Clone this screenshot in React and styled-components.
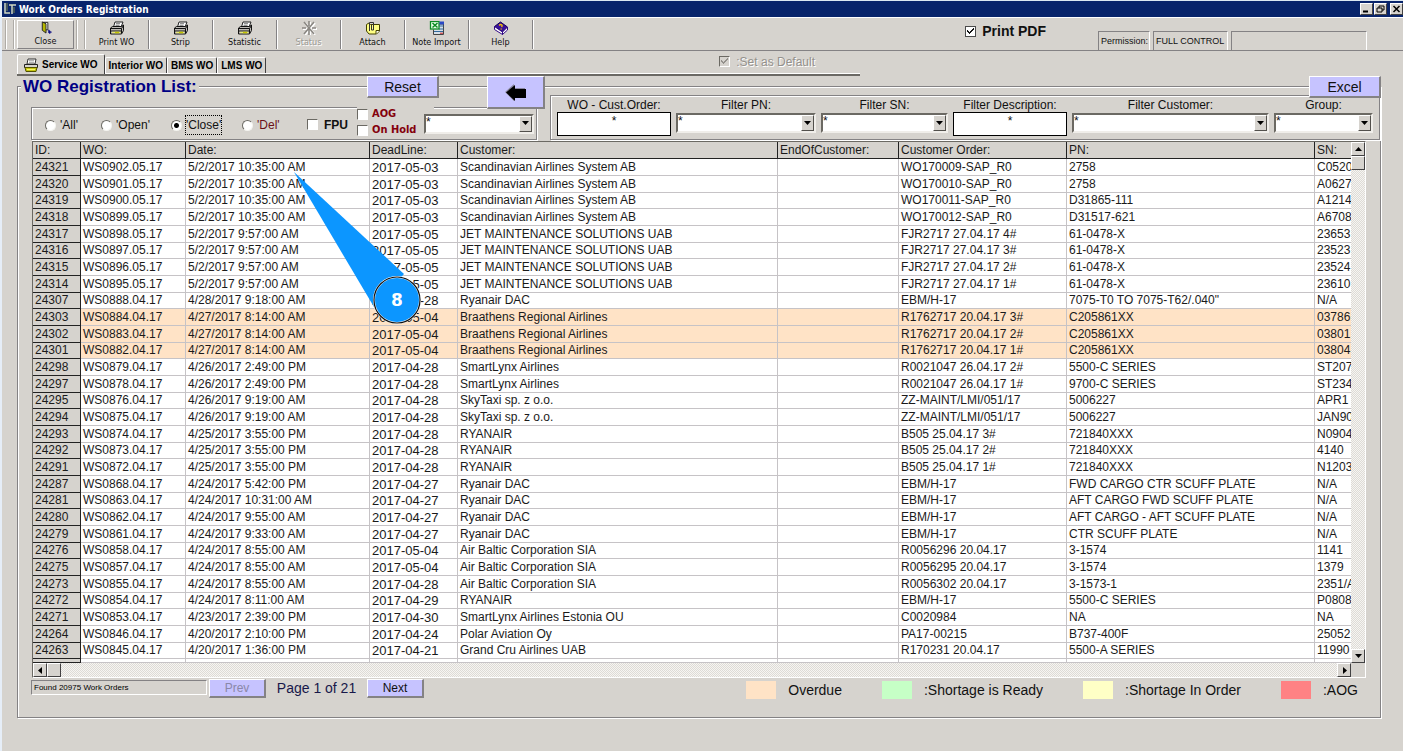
import React from "react";
import styled, { createGlobalStyle, css } from "styled-components";

const face = "#d6d3ce";
const shade = "#848284";
const sans = '"Liberation Sans", Arial, sans-serif';
const ui = '"DejaVu Sans Condensed", "DejaVu Sans", sans-serif';

const GlobalStyle = createGlobalStyle`
  * { box-sizing: border-box; }
  body { margin: 0; background: ${face}; font: 12px ${sans}; color: #111; }
  button, input, select { font: inherit; color: inherit; margin: 0; }
  button { padding: 0; }
`;

const Window = styled.div`
  min-height: 100vh;
  background: ${face};
  border-left: 2px solid #e6eef8;
  border-top: 1px solid #dce8f2;
  overflow: hidden;
`;

const TitleBar = styled.header`
  display: flex;
  align-items: center;
  height: 16px;
  padding-left: 2px;
  gap: 3px;
  background: #08246b;
  color: #fff;
  font: bold 10px ${ui};
  white-space: nowrap;
`;

const WindowButtons = styled.div`
  display: flex;
  margin-left: auto;
  gap: 1px;
`;

const WindowButton = styled.button`
  display: flex;
  align-items: center;
  justify-content: center;
  width: 13px;
  height: 12px;
  margin-left: ${(p) => (p.$apart ? "2px" : "0")};
  background: ${face};
  border: 1px solid;
  border-color: #fff #424142 #424142 #fff;
`;

const Toolbar = styled.div`
  display: flex;
  height: 34px;
  padding-left: 3px;
  border-top: 1px solid #fff;
  border-bottom: 1px solid ${shade};
`;

const Grip = styled.span`
  width: 9px;
  margin: 2px 0 1px;
  border: solid #aeaba6;
  border-width: 0 1px;
  box-shadow: 1px 0 #fff, inset 1px 0 #fff;
`;

const ToolButton = styled.button`
  display: flex;
  flex-direction: column;
  align-items: center;
  width: ${(p) => (p.$raised ? "57px" : "64px")};
  margin: 2px 0 1px;
  padding-top: ${(p) => (p.$raised ? "0" : "1px")};
  background: none;
  border: 0 solid ${shade};
  border-right-width: 1px;
  box-shadow: 1px 0 #fff;
  font: 9px/14px ${ui};
  white-space: nowrap;
  ${(p) => p.$raised && css`
    border-width: 1px;
    border-color: #fff ${shade} ${shade} #fff;
    box-shadow: none;
    margin-left: 3px;
    margin-right: 2px;
  `}
  &:disabled { color: #9c9a94; text-shadow: 1px 1px #fff; }
  svg { display: block; }
`;

const StatusPanels = styled.div`
  display: flex;
  align-items: flex-end;
  gap: 3px;
  margin: 0 36px 0 52px;
`;

const StatusPanel = styled.div`
  width: ${(p) => p.$width}px;
  height: 19px;
  padding: 0 2px;
  border: solid;
  border-width: 1px 1px 0;
  border-color: ${shade} #fff #fff ${shade};
  font: 9px/19px ${sans};
  white-space: nowrap;
`;

const Check = styled.input.attrs({ type: "checkbox" })`
  appearance: none;
  flex: none;
  width: 11px;
  height: 11px;
  border: 1px solid;
  border-color: ${(p) => (p.$flat ? "#000" : "#6b6963 #fff #fff #6b6963")};
  outline: ${(p) => (p.$flat ? "1px solid #4a4a4a" : "0")};
  outline-offset: -1px;
  background: ${(p) => (p.disabled ? face : "#fff")};
  &:checked {
    background-image: linear-gradient(45deg, transparent 42%, currentColor 42% 60%, transparent 60%),
      linear-gradient(-45deg, transparent 38%, currentColor 38% 62%, transparent 62%);
    background-size: 3px 4px, 5px 6px;
    background-position: 1px 3px, 3px 1px;
    background-repeat: no-repeat;
  }
`;

const Label = styled.label`
  display: flex;
  align-items: center;
  gap: 6px;
  white-space: nowrap;
`;

const PrintLabel = styled(Label)`
  margin-left: auto;
  height: 26px;
  font-size: 14px;
  font-weight: bold;
`;

const DefaultLabel = styled(Label)`
  margin: 0 45px 2px auto;
  align-self: center;
  color: #94918c;
  text-shadow: 1px 1px #fff;
`;

const TabStrip = styled.nav`
  display: flex;
  align-items: flex-end;
  width: 843px;
  max-width: 100%;
  height: 25px;
  margin-left: 15px;
  border-bottom: 2px solid #6b6964;
  box-shadow: inset 0 -1px #fff;
`;

const Tab = styled.button`
  display: flex;
  align-items: center;
  gap: 4px;
  height: ${(p) => (p.$active ? "20px" : "16px")};
  margin-bottom: ${(p) => (p.$active ? "0" : "1px")};
  padding: 0 ${(p) => (p.$active ? "6px" : "3px")};
  background: ${face};
  border: solid;
  border-width: 1px 1px 0;
  border-color: #fff #424142 #fff #fff;
  border-radius: 2px 2px 0 0;
  color: #000;
  font: bold 10px ${sans};
  white-space: nowrap;
`;

const Panel = styled.section`
  margin: 10px 22px 32px 15px;
  border: 1px solid ${shade};
  box-shadow: 1px 1px #fff, inset 1px 1px #fff;
`;

const PanelHead = styled.div`
  display: flex;
  height: 22px;
  margin: -11px -1px 0 0;
`;

const TitleSlot = styled.div`
  width: 349px;
`;

const Title = styled.h1`
  display: inline-block;
  margin: 0 0 0 3px;
  padding: 0 2px;
  background: ${face};
  color: #000084;
  font: bold 17px/22px ${sans};
  white-space: nowrap;
`;

const PushButton = styled.button`
  display: flex;
  align-items: center;
  justify-content: center;
  position: relative;
  width: ${(p) => p.$width}px;
  height: ${(p) => p.$height}px;
  background: #c6c3ff;
  border: solid;
  border-width: 1px 2px 2px 1px;
  border-color: #fff ${shade} ${shade} #fff;
  font-size: ${(p) => p.$size || 12}px;
  &:disabled { color: #8a87a8; }
`;

const ArrowButton = styled(PushButton)`
  margin-left: 48px;
`;

const ExcelButton = styled(PushButton)`
  margin-left: auto;
`;

const Filters = styled.div`
  display: flex;
  align-items: flex-end;
  gap: 13px;
  margin: -3px 0 0 13px;
`;

const frame = css`
  border: 1px solid ${shade};
  box-shadow: 1px 1px #fff, inset 1px 1px #fff;
`;

const StateBox = styled.div`
  display: flex;
  align-items: center;
  width: 506px;
  height: 33px;
  padding-left: 13px;
  ${frame}
`;

const StateOption = styled(Label)`
  gap: 3px;
  margin-top: 3px;
  width: ${(p) => p.$width}px;
  color: ${(p) => (p.$danger ? "#6b1018" : "inherit")};
`;

const OptionText = styled.span`
  padding: 2px 0;
  border: 1px dotted ${(p) => (p.$focused ? "#000" : "transparent")};
`;

const Radio = styled.input.attrs({ type: "radio" })`
  appearance: none;
  width: 11px;
  height: 11px;
  border: 1px solid;
  border-color: #6b6963 #f4f4f0 #f4f4f0 #6b6963;
  border-radius: 50%;
  background: #fff;
  &:checked { background: radial-gradient(#000 0 2px, #fff 3px); }
`;

const FpuLabel = styled(Label)`
  width: 50px;
  margin-top: 2px;
  font-weight: bold;
`;

const FlagStack = styled.div`
  align-self: flex-start;
  width: 77px;
  margin: -2px -10px 0 0;
  background: ${face};
`;

const FlagLabel = styled(Label)`
  gap: 4px;
  height: 16px;
  color: #84000c;
  font: bold 11px/16px ${ui};
`;

const ComboBox = styled.div`
  position: relative;
  width: ${(p) => (p.$width ? p.$width + "px" : "auto")};
  height: 20px;
  margin-top: ${(p) => (p.$width ? "0" : "1px")};
  background: #fff;
  border: 2px solid;
  border-color: #6b6963 #f0eeea #f0eeea #6b6963;
`;

const ComboSelect = styled.select`
  display: block;
  appearance: none;
  width: 100%;
  height: 16px;
  padding: 0 16px 4px 0;
  border: 0;
  border-radius: 0;
  background: transparent;
  line-height: 12px;
  outline: 0;
`;

const ComboArrow = styled.span`
  position: absolute;
  top: 0;
  right: 0;
  display: flex;
  align-items: center;
  justify-content: center;
  width: 13px;
  height: 16px;
  background: ${face};
  border: 1px solid;
  border-color: #fff #52504c #52504c #fff;
  pointer-events: none;
`;

const FilterBox = styled.div`
  display: grid;
  grid-template-columns: 114px 140fr 127fr 114px 197fr 99fr;
  gap: 5px;
  flex: 1;
  height: 45px;
  padding: 2px 6px 0;
  ${frame}
`;

const Field = styled.div`
  min-width: 0;
  label {
    display: block;
    line-height: 14px;
    text-align: center;
    white-space: nowrap;
  }
`;

const TextBox = styled.input`
  display: block;
  width: 100%;
  height: 24px;
  padding: 0 0 6px;
  border: 1px solid #000;
  background: #fff;
  text-align: center;
`;

const GridFrame = styled.div`
  position: relative;
  margin: 1px 14px 0 14px;
  border: 1px solid;
  border-color: #6b6963 #fff #fff #6b6963;
`;

const GridBody = styled.div`
  display: flex;
`;

const GridView = styled.div`
  flex: 1;
  min-width: 0;
  overflow: hidden;
  background: #fff;
`;

const Table = styled.table`
  width: 100%;
  min-width: 1340px;
  table-layout: fixed;
  border-collapse: separate;
  border-spacing: 0;
  line-height: 15px;
  color: #1a1a1a;
`;

const HeadCell = styled.th`
  height: 17px;
  padding: 0 2px;
  background: ${face};
  border: solid #222;
  border-width: 0 1px 1px 0;
  font-weight: normal;
  text-align: left;
  white-space: nowrap;
`;

const Row = styled.tr`
  height: 17px;
  background: ${(p) => (p.$overdue ? "#ffe3c6" : "#fff")};
  &:nth-child(3n) { height: 16px; }
  &:last-child { height: 4px; }
`;

const Cell = styled.td`
  padding: 0 2px;
  border: solid #c6c3c6;
  border-width: 0 1px 1px 0;
  font-size: ${(p) => (p.$due ? "13px" : "12px")};
  white-space: nowrap;
  overflow: hidden;
`;

const IdCell = styled.th`
  padding: 0 2px;
  background: ${face};
  border: solid #222;
  border-width: 0 1px 1px 0;
  font-weight: normal;
  text-align: left;
`;

const track = css`
  background: repeating-conic-gradient(#f6f5f2 0 25%, #dedbd6 0 50%) 0 0 / 2px 2px;
`;

const VScroll = styled.div`
  display: flex;
  flex-direction: column;
  width: 14px;
  ${track}
`;

const HScroll = styled.div`
  display: flex;
  height: 14px;
  margin-right: 14px;
  ${track}
`;

const ScrollPart = styled.button`
  display: flex;
  align-items: center;
  justify-content: center;
  width: 14px;
  height: 14px;
  background: ${face};
  border: 1px solid;
  border-color: #fff #424142 #424142 #fff;
  ${(p) => p.$end === "bottom" && "margin-top: auto;"}
  ${(p) => p.$end === "right" && "margin-left: auto;"}
`;

const Callout = styled.div`
  position: absolute;
  left: 259px;
  top: 27px;
  width: 130px;
  height: 156px;
  pointer-events: none;
  svg { display: block; }
`;

const CalloutNumber = styled.span`
  position: absolute;
  left: 83px;
  top: 111px;
  width: 44px;
  color: #fff;
  font: bold 17px/40px "DejaVu Sans", sans-serif;
  text-align: center;
`;

const Footer = styled.div`
  display: flex;
  align-items: flex-start;
  height: 39px;
  padding: 1px 22px 0 13px;
  white-space: nowrap;
`;

const Found = styled.div`
  width: 176px;
  height: 15px;
  margin: 1px 2px 0 0;
  padding-left: 2px;
  border: 1px solid;
  border-color: ${shade} #fff #fff ${shade};
  font: 8px/13px ${sans};
  color: #000;
`;

const PageText = styled.span`
  width: 101px;
  text-align: center;
  font-size: 14px;
  line-height: 18px;
  color: #18184a;
`;

const Legend = styled.ul`
  display: flex;
  gap: 40px;
  margin: 2px 0 0 auto;
  padding: 0;
  list-style: none;
`;

const LegendItem = styled.li`
  display: flex;
  align-items: center;
  gap: 12px;
  font-size: 14px;
  line-height: 18px;
`;

const Swatch = styled.span`
  width: 30px;
  height: 18px;
  background: ${(p) => p.$color};
`;

const Triangle = ({ dir = "down" }) => {
  const points = { down: "0,1 7,1 3.5,5", up: "0,5 7,5 3.5,1", left: "5,0 5,7 1,3.5", right: "2,0 2,7 6,3.5" };
  return (
    <svg width="7" height="7" viewBox="0 0 7 7" aria-hidden="true">
      <polygon points={points[dir]} fill="#000" />
    </svg>
  );
};

const Icon = ({ size = 16, children }) => (
  <svg width={size} height={size} viewBox="1 1 14 14" aria-hidden="true">{children}</svg>
);

const DoorIcon = () => (
  <Icon>
    <path d="M5 2.500h5v8H8" fill="#fff" stroke="#222" />
    <path d="M4 2l4 2v10l-4-3z" fill="#b5b600" stroke="#222" />
    <path d="M11 10.500v2.500h3M12.500 11.500L11 13l1.500 1.500" fill="none" stroke="#101084" strokeWidth="1.200" />
  </Icon>
);

const PrinterIcon = () => (
  <Icon>
    <path d="M4.500 7l1.500-5h8l-2 5z" fill="#fff" stroke="#222" />
    <path d="M7 3.700h4M6.500 5.300h4" stroke="#555" strokeWidth=".8" />
    <path d="M1.500 8l2-1.500h9L14.500 5v5.500l-2 3.500h-11z" fill="#bdbab5" stroke="#111" />
    <path d="M1.500 8.500h11v5M12.500 8.500l2-3M2 11h10.500" fill="none" stroke="#111" />
    <path d="M3 12.500h8.500" stroke="#e7e77b" strokeWidth="1.500" />
    <path d="M6 12.500h4" stroke="#c6c600" strokeWidth="1.500" />
  </Icon>
);

const TabPrinterIcon = () => (
  <Icon size={14}>
    <path d="M4 7l1-5h8l-1 5z" fill="#fff" stroke="#333" />
    <path d="M6 3.700h5M6 5.300h5" stroke="#888" strokeWidth=".8" />
    <path d="M1.500 7.500h13v3h-13z" fill="#d6d3ce" stroke="#222" />
    <path d="M2 10.500h12l-1 4H3z" fill="#c6c610" stroke="#525200" />
    <path d="M4 12.500h8" stroke="#f7f76b" />
  </Icon>
);

const StatusIcon = () => (
  <Icon>
    <path d="M3 2l10 12M13 2L3 14M8 1v5M8 10v5M1 8h4M11 8h4" stroke="#fff" strokeWidth="2" transform="translate(1 1)" />
    <path d="M3 2l10 12M13 2L3 14M8 1v5M8 10v5M1 8h4M11 8h4" stroke="#8a8782" strokeWidth="1.600" />
  </Icon>
);

const AttachIcon = () => (
  <Icon>
    <path d="M1.500 4.500L4 3l1.500 1.500h9V11l-3 3H4L1.500 11z" fill="#ffff84" stroke="#424100" />
    <path d="M11 14v-3.500h3.500" fill="#fff" stroke="#424100" />
    <path d="M4.500 11V2.500h4V10H6.500V5" fill="none" stroke="#333" />
  </Icon>
);

const ImportIcon = () => (
  <Icon>
    <path d="M6 4h8.500v10.500H4.500v-5" fill="#d6dfe7" stroke="#444" />
    <path d="M10 6h4.500M10 9h4.500M5 11.500h9" stroke="#31699c" />
    <rect x="1.500" y="1.500" width="8.500" height="7.500" fill="#e7ffe7" stroke="#0b8a22" strokeWidth="1.300" />
    <path d="M3.500 3l5 4.500M8.500 3l-5 4.500" stroke="#0b8a22" strokeWidth="1.500" />
    <path d="M10.500 1.500H15v3h-4.500z" fill="#2948c6" />
    <path d="M11 13.200h3" stroke="#d02020" />
  </Icon>
);

const BookIcon = () => (
  <Icon>
    <path d="M1.500 6.500l6-4.500 7 5-5 5z" fill="#39109c" stroke="#180052" />
    <path d="M1.500 6.500v3l8 5V12zM9.500 14.500l5-4.500V7l-5 5z" fill="#fff" stroke="#310884" />
    <path d="M6.200 5.500c1.500-2 4-.5 2.300 1.500M8.200 8.500v1" fill="none" stroke="#f6c600" strokeWidth="1.400" />
  </Icon>
);

const AppIcon = () => (
  <svg width="12" height="12" viewBox="0 0 12 12" aria-hidden="true">
    <path d="M1 0v10h5M5 2h7M8 2v9" fill="none" stroke="#cfd6c0" strokeWidth="1.500" />
    <path d="M3 0v8M10 4v6" stroke="#7a8450" />
  </svg>
);

const ArrowIcon = () => (
  <svg width="21" height="17" viewBox="0 0 21 17" aria-hidden="true">
    <path d="M0 8l9-8v4h11v10H9v3z" fill="#8a87a0" />
    <path d="M1 8.500l9-7.500v4h11v9H10v3z" fill="#000" />
  </svg>
);

const Combo = ({ id, width, label }) => (
  <ComboBox $width={width}>
    <ComboSelect id={id} aria-label={label} defaultValue="*">
      <option value="*">*</option>
    </ComboSelect>
    <ComboArrow><Triangle /></ComboArrow>
  </ComboBox>
);

const filters = [
  { id: "order", label: "WO - Cust.Order:", text: true },
  { id: "pn", label: "Filter PN:" },
  { id: "sn", label: "Filter SN:" },
  { id: "description", label: "Filter Description:", text: true },
  { id: "customer", label: "Filter Customer:" },
  { id: "group", label: "Group:" },
];

const tools = [
  ["Print WO", PrinterIcon],
  ["Strip", PrinterIcon],
  ["Statistic", PrinterIcon],
  ["Status", StatusIcon, true],
  ["Attach", AttachIcon],
  ["Note Import", ImportIcon],
  ["Help", BookIcon],
];

const states = [
  { label: "'All'", width: 56 },
  { label: "'Open'", width: 70 },
  { label: "'Close'", width: 71, on: true },
  { label: "'Del'", width: 65, danger: true },
];

const columns = [
  ["ID:", 48], ["WO:", 105], ["Date:", 184], ["DeadLine:", 88], ["Customer:", 320],
  ["EndOfCustomer:", 121], ["Customer Order:", 168], ["PN:", 248], ["SN:"],
];

const SAS = "Scandinavian Airlines System AB";
const JET = "JET MAINTENANCE SOLUTIONS UAB";
const BRA = "Braathens Regional Airlines";
const BALTIC = "Air Baltic Corporation SIA";

const orders = [
  ["24321", "WS0902.05.17", "5/2/2017 10:35:00 AM", "2017-05-03", SAS, "WO170009-SAP_R0", "2758", "C0520"],
  ["24320", "WS0901.05.17", "5/2/2017 10:35:00 AM", "2017-05-03", SAS, "WO170010-SAP_R0", "2758", "A0627"],
  ["24319", "WS0900.05.17", "5/2/2017 10:35:00 AM", "2017-05-03", SAS, "WO170011-SAP_R0", "D31865-111", "A1214"],
  ["24318", "WS0899.05.17", "5/2/2017 10:35:00 AM", "2017-05-03", SAS, "WO170012-SAP_R0", "D31517-621", "A6708"],
  ["24317", "WS0898.05.17", "5/2/2017 9:57:00 AM", "2017-05-05", JET, "FJR2717 27.04.17 4#", "61-0478-X", "23653"],
  ["24316", "WS0897.05.17", "5/2/2017 9:57:00 AM", "2017-05-05", JET, "FJR2717 27.04.17 3#", "61-0478-X", "23523"],
  ["24315", "WS0896.05.17", "5/2/2017 9:57:00 AM", "2017-05-05", JET, "FJR2717 27.04.17 2#", "61-0478-X", "23524"],
  ["24314", "WS0895.05.17", "5/2/2017 9:57:00 AM", "2017-05-05", JET, "FJR2717 27.04.17 1#", "61-0478-X", "23610"],
  ["24307", "WS0888.04.17", "4/28/2017 9:18:00 AM", "2017-04-28", "Ryanair DAC", "EBM/H-17", '7075-T0 TO 7075-T62/.040"', "N/A"],
  ["24303", "WS0884.04.17", "4/27/2017 8:14:00 AM", "2017-05-04", BRA, "R1762717 20.04.17 3#", "C205861XX", "03786", true],
  ["24302", "WS0883.04.17", "4/27/2017 8:14:00 AM", "2017-05-04", BRA, "R1762717 20.04.17 2#", "C205861XX", "03801", true],
  ["24301", "WS0882.04.17", "4/27/2017 8:14:00 AM", "2017-05-04", BRA, "R1762717 20.04.17 1#", "C205861XX", "03804", true],
  ["24298", "WS0879.04.17", "4/26/2017 2:49:00 PM", "2017-04-28", "SmartLynx Airlines", "R0021047 26.04.17 2#", "5500-C SERIES", "ST207"],
  ["24297", "WS0878.04.17", "4/26/2017 2:49:00 PM", "2017-04-28", "SmartLynx Airlines", "R0021047 26.04.17 1#", "9700-C SERIES", "ST234"],
  ["24295", "WS0876.04.17", "4/26/2017 9:19:00 AM", "2017-04-28", "SkyTaxi sp. z o.o.", "ZZ-MAINT/LMI/051/17", "5006227", "APR1"],
  ["24294", "WS0875.04.17", "4/26/2017 9:19:00 AM", "2017-04-28", "SkyTaxi sp. z o.o.", "ZZ-MAINT/LMI/051/17", "5006227", "JAN90"],
  ["24293", "WS0874.04.17", "4/25/2017 3:55:00 PM", "2017-04-28", "RYANAIR", "B505 25.04.17 3#", "721840XXX", "N0904"],
  ["24292", "WS0873.04.17", "4/25/2017 3:55:00 PM", "2017-04-28", "RYANAIR", "B505 25.04.17 2#", "721840XXX", "4140"],
  ["24291", "WS0872.04.17", "4/25/2017 3:55:00 PM", "2017-04-28", "RYANAIR", "B505 25.04.17 1#", "721840XXX", "N1203"],
  ["24287", "WS0868.04.17", "4/24/2017 5:42:00 PM", "2017-04-27", "Ryanair DAC", "EBM/H-17", "FWD CARGO CTR SCUFF PLATE", "N/A"],
  ["24281", "WS0863.04.17", "4/24/2017 10:31:00 AM", "2017-04-27", "Ryanair DAC", "EBM/H-17", "AFT CARGO FWD SCUFF PLATE", "N/A"],
  ["24280", "WS0862.04.17", "4/24/2017 9:55:00 AM", "2017-04-27", "Ryanair DAC", "EBM/H-17", "AFT CARGO - AFT SCUFF PLATE", "N/A"],
  ["24279", "WS0861.04.17", "4/24/2017 9:33:00 AM", "2017-04-27", "Ryanair DAC", "EBM/H-17", "CTR SCUFF PLATE", "N/A"],
  ["24276", "WS0858.04.17", "4/24/2017 8:55:00 AM", "2017-05-04", BALTIC, "R0056296 20.04.17", "3-1574", "1141"],
  ["24275", "WS0857.04.17", "4/24/2017 8:55:00 AM", "2017-05-04", BALTIC, "R0056295 20.04.17", "3-1574", "1379"],
  ["24273", "WS0855.04.17", "4/24/2017 8:55:00 AM", "2017-04-28", BALTIC, "R0056302 20.04.17", "3-1573-1", "2351/A"],
  ["24272", "WS0854.04.17", "4/24/2017 8:11:00 AM", "2017-04-29", "RYANAIR", "EBM/H-17", "5500-C SERIES", "P0808"],
  ["24271", "WS0853.04.17", "4/23/2017 2:39:00 PM", "2017-04-30", "SmartLynx Airlines Estonia OU", "C0020984", "NA", "NA"],
  ["24264", "WS0846.04.17", "4/20/2017 2:10:00 PM", "2017-04-24", "Polar Aviation Oy", "PA17-00215", "B737-400F", "25052"],
  ["24263", "WS0845.04.17", "4/20/2017 1:36:00 PM", "2017-04-21", "Grand Cru Airlines UAB", "R170231 20.04.17", "5500-A SERIES", "11990"],
];

const OrderRow = ({ order }) => {
  const [id, wo, date, deadline, customer, reference, pn, sn, overdue] = order;
  return (
    <Row $overdue={overdue}>
      <IdCell scope="row">{id}</IdCell>
      <Cell>{wo}</Cell>
      <Cell>{date}</Cell>
      <Cell $due>{deadline}</Cell>
      <Cell>{customer}</Cell>
      <Cell />
      <Cell>{reference}</Cell>
      <Cell>{pn}</Cell>
      <Cell>{sn}</Cell>
    </Row>
  );
};

export default function App() {
  return (
    <Window>
      <GlobalStyle />
      <TitleBar>
        <AppIcon />
        Work Orders Registration
        <WindowButtons>
          <WindowButton aria-label="Minimize">
            <svg width="9" height="8" viewBox="0 0 9 8"><path d="M1 6.500h5" stroke="#000" strokeWidth="2" /></svg>
          </WindowButton>
          <WindowButton aria-label="Restore">
            <svg width="9" height="8" viewBox="0 0 9 8"><path d="M3 3V1h5v4H6M1 3h5v4H1z" fill="none" stroke="#000" /></svg>
          </WindowButton>
          <WindowButton aria-label="Close window" $apart>
            <svg width="9" height="8" viewBox="0 0 9 8"><path d="M1.500 1l6 6M7.500 1l-6 6" stroke="#000" strokeWidth="1.500" /></svg>
          </WindowButton>
        </WindowButtons>
      </TitleBar>

      <Toolbar>
        <Grip />
        <ToolButton $raised><DoorIcon />Close</ToolButton>
        <Grip />
        {tools.map(([name, Glyph, disabled]) => (
          <ToolButton key={name} disabled={disabled}><Glyph />{name}</ToolButton>
        ))}
        <PrintLabel><Check $flat defaultChecked />Print PDF</PrintLabel>
        <StatusPanels>
          <StatusPanel $width={52}>Permission:</StatusPanel>
          <StatusPanel $width={75}>FULL CONTROL</StatusPanel>
          <StatusPanel $width={136} />
        </StatusPanels>
      </Toolbar>

      <TabStrip>
        <Tab $active><TabPrinterIcon />Service WO</Tab>
        <Tab>Interior WO</Tab>
        <Tab>BMS WO</Tab>
        <Tab>LMS WO</Tab>
        <DefaultLabel><Check defaultChecked disabled />:Set as Default</DefaultLabel>
      </TabStrip>

      <Panel>
        <PanelHead>
          <TitleSlot><Title>WO Registration List:</Title></TitleSlot>
          <PushButton $width={72} $height={22} $size={14}>Reset</PushButton>
          <ArrowButton $width={58} $height={33} aria-label="Back"><ArrowIcon /></ArrowButton>
          <ExcelButton $width={72} $height={22} $size={14}>Excel</ExcelButton>
        </PanelHead>

        <Filters>
          <StateBox>
            {states.map((s) => (
              <StateOption key={s.label} $width={s.width} $danger={s.danger}>
                <Radio name="state" defaultChecked={s.on} />
                <OptionText $focused={s.on}>{s.label}</OptionText>
              </StateOption>
            ))}
            <FpuLabel><Check />FPU</FpuLabel>
            <FlagStack>
              <FlagLabel><Check />AOG</FlagLabel>
              <FlagLabel><Check />On Hold</FlagLabel>
            </FlagStack>
            <Combo width={110} label="Order type" />
          </StateBox>
          <FilterBox>
            {filters.map((f) => (
              <Field key={f.id}>
                <label htmlFor={f.id}>{f.label}</label>
                {f.text ? <TextBox id={f.id} defaultValue="*" /> : <Combo id={f.id} />}
              </Field>
            ))}
          </FilterBox>
        </Filters>

        <GridFrame>
          <GridBody>
            <GridView>
              <Table>
                <colgroup>
                  {columns.map(([name, width]) => <col key={name} width={width} />)}
                </colgroup>
                <thead>
                  <tr>{columns.map(([name]) => <HeadCell key={name} scope="col">{name}</HeadCell>)}</tr>
                </thead>
                <tbody>
                  {orders.map((order) => <OrderRow key={order[0]} order={order} />)}
                  <Row>
                    <IdCell />
                    {columns.slice(1).map(([name]) => <Cell key={name} />)}
                  </Row>
                </tbody>
              </Table>
            </GridView>
            <VScroll>
              <ScrollPart aria-label="Scroll up"><Triangle dir="up" /></ScrollPart>
              <ScrollPart aria-label="Vertical position" />
              <ScrollPart aria-label="Scroll down" $end="bottom"><Triangle /></ScrollPart>
            </VScroll>
          </GridBody>
          <HScroll>
            <ScrollPart aria-label="Scroll left"><Triangle dir="left" /></ScrollPart>
            <ScrollPart aria-label="Horizontal position" />
            <ScrollPart aria-label="Scroll right" $end="right"><Triangle dir="right" /></ScrollPart>
          </HScroll>
          <Callout>
            <svg width="130" height="156" viewBox="0 0 130 156" aria-hidden="true">
              <polygon points="2,3 112,105 82,138" fill="#0c96ff" />
              <circle cx="105" cy="131" r="23" fill="#0c96ff" stroke="#fff" strokeWidth="2" />
              <circle cx="105" cy="131" r="23" fill="none" stroke="#111" strokeWidth="1.200" />
            </svg>
            <CalloutNumber>8</CalloutNumber>
          </Callout>
        </GridFrame>

        <Footer>
          <Found>Found 20975 Work Orders</Found>
          <PushButton $width={57} $height={19} disabled>Prev</PushButton>
          <PageText>Page 1 of 21</PageText>
          <PushButton $width={57} $height={19}>Next</PushButton>
          <Legend>
            <LegendItem><Swatch $color="#ffe3c6" />Overdue</LegendItem>
            <LegendItem><Swatch $color="#c6ffc6" />:Shortage is Ready</LegendItem>
            <LegendItem><Swatch $color="#ffffc6" />:Shortage In Order</LegendItem>
            <LegendItem><Swatch $color="#ff8284" />:AOG</LegendItem>
          </Legend>
        </Footer>
      </Panel>
    </Window>
  );
}
